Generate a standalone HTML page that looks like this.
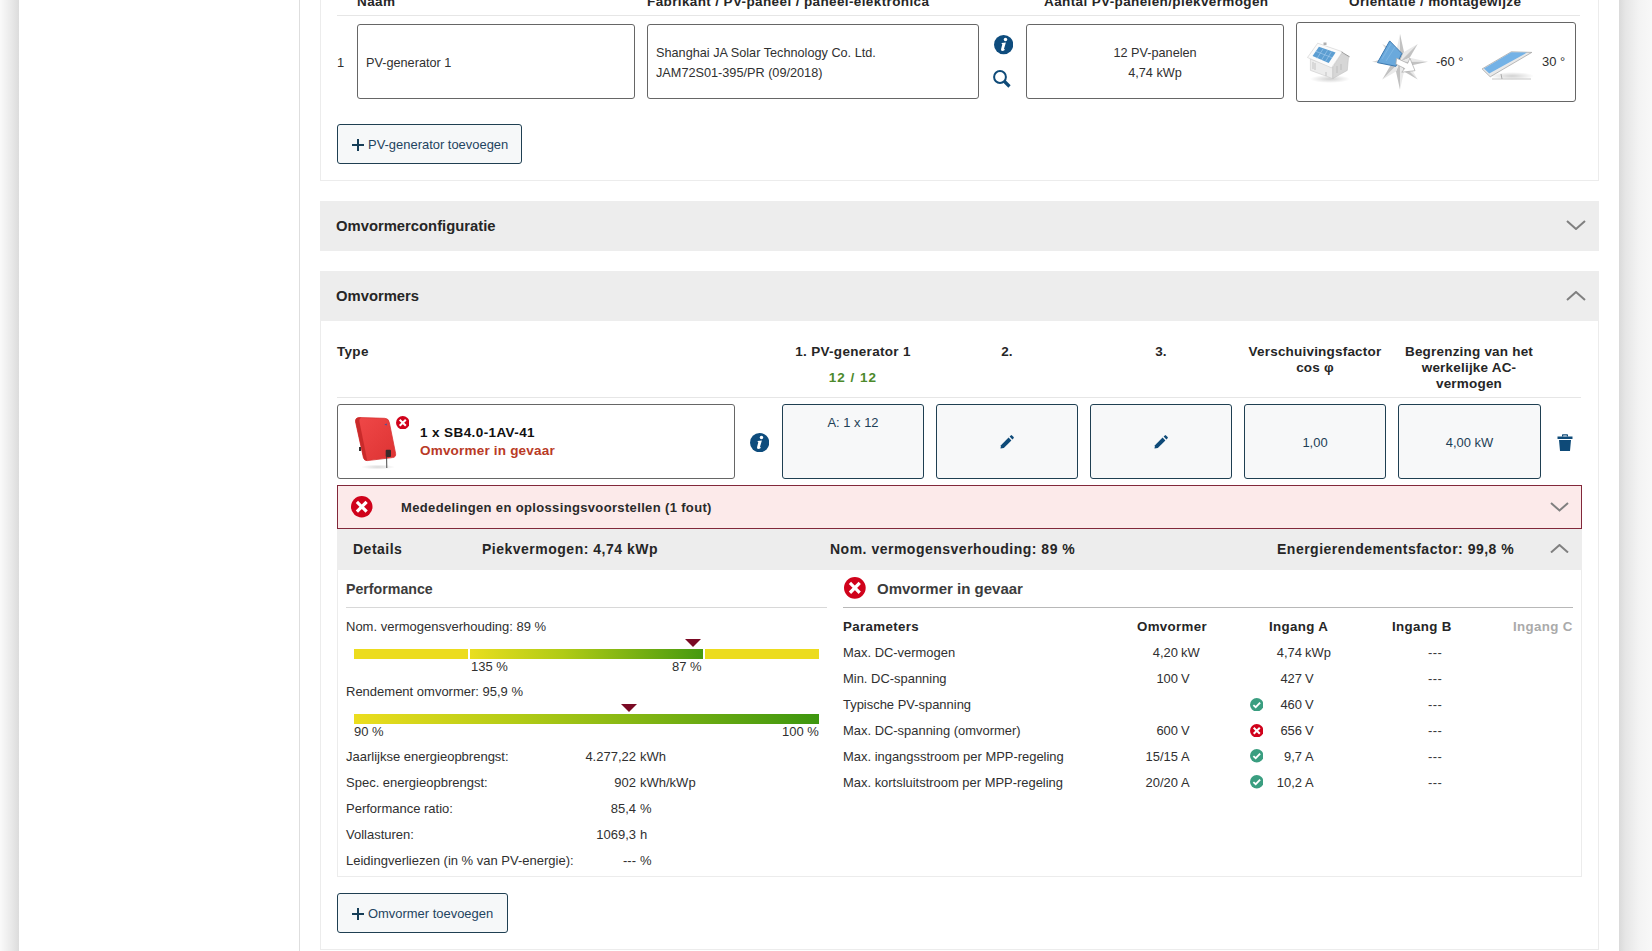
<!DOCTYPE html>
<html><head><meta charset="utf-8">
<style>
*{margin:0;padding:0;box-sizing:border-box}
html,body{width:1652px;height:951px;overflow:hidden;background:#fff;font-family:"Liberation Sans",sans-serif;color:#303030;font-size:12.95px}
.abs{position:absolute}
#shl{position:absolute;left:0;top:0;width:19px;height:951px;background:linear-gradient(to right,#fafafa,#e9e9e9 60%,#dcdcdc)}
#shr{position:absolute;left:1619px;top:0;width:33px;height:951px;background:linear-gradient(to right,#dadada,#e6e6e6 20%,#f3f3f3 60%,#f8f8f8)}
.vl{position:absolute;width:1px;background:#dedede}
.hl{position:absolute;height:1px;background:#e6e6e6}
.box{position:absolute;border:1px solid #666;border-radius:3px;background:#fff;font-size:12.7px}
.ibox{position:absolute;border:1px solid #1f3f52;border-radius:3px;background:#f7f8f9;color:#1e3f56;text-align:center}
.btn{position:absolute;border:1px solid #1f3f52;border-radius:3px;background:#f6f8f9;color:#1e4460;font-size:12.95px}
.b{font-weight:bold;color:#262626}
.hdr{position:absolute;background:#ededed}
.t{position:absolute;white-space:nowrap;line-height:16px;margin-top:1px}
</style></head><body>
<div id="shl"></div><div id="shr"></div>
<div class="vl" style="left:299px;top:0;height:951px"></div>

<!-- panel 1 -->
<div class="abs" style="left:320px;top:-10px;width:1279px;height:191px;border:1px solid #ececec;border-top:none"></div>
<div class="t b" style="left:357px;top:-7px;font-size:13.5px;letter-spacing:0.38px">Naam</div>
<div class="t b" style="left:647px;top:-7px;font-size:13.5px;letter-spacing:0.38px">Fabrikant / PV-paneel / paneel-elektronica</div>
<div class="t b" style="left:1044px;top:-7px;font-size:13.5px;letter-spacing:0.38px">Aantal PV-panelen/piekvermogen</div>
<div class="t b" style="left:1349px;top:-7px;font-size:13.5px;letter-spacing:0.38px">Orientatie / montagewijze</div>
<div class="hl" style="left:337px;top:15px;width:1243px"></div>
<div class="t" style="left:337px;top:54px">1</div>
<div class="box" style="left:357px;top:24px;width:278px;height:75px"><div class="t" style="left:8px;top:29px">PV-generator 1</div></div>
<div class="box" style="left:647px;top:24px;width:332px;height:75px"><div class="t" style="left:8px;top:19px">Shanghai JA Solar Technology Co. Ltd.</div><div class="t" style="left:8px;top:39px">JAM72S01-395/PR (09/2018)</div></div>
<div class="box" style="left:1026px;top:24px;width:258px;height:75px;text-align:center"><div style="position:absolute;left:0;right:0;top:20px;line-height:16px">12 PV-panelen</div><div style="position:absolute;left:0;right:0;top:40px;line-height:16px">4,74 kWp</div></div>
<div class="box" style="left:1296px;top:22px;width:280px;height:80px"></div>
<div class="btn" style="left:337px;top:124px;width:185px;height:40px"><span class="abs" style="left:30px;top:12px">PV-generator toevoegen</span></div>

<!-- section headers -->
<div class="hdr" style="left:320px;top:201px;width:1279px;height:50px"><div class="t b" style="left:16px;top:16px;font-size:14.8px">Omvormerconfiguratie</div></div>
<div class="hdr" style="left:320px;top:271px;width:1279px;height:50px"><div class="t b" style="left:16px;top:16px;font-size:14.8px">Omvormers</div></div>


<!-- omvormers body -->
<div class="abs" style="left:320px;top:321px;width:1279px;height:629px;border:1px solid #ececec;border-top:none"></div>
<div class="t b" style="left:337px;top:343px;font-size:13.5px;letter-spacing:0.3px">Type</div>
<div class="t b" style="left:773px;top:343px;width:160px;text-align:center;font-size:13.5px;letter-spacing:0.3px">1. PV-generator 1</div>
<div class="t b" style="left:773px;top:369px;width:160px;text-align:center;font-size:13.5px;letter-spacing:1px;color:#4c8a2c">12 / 12</div>
<div class="t b" style="left:927px;top:343px;width:160px;text-align:center;font-size:13.5px">2.</div>
<div class="t b" style="left:1081px;top:343px;width:160px;text-align:center;font-size:13.5px">3.</div>
<div class="t b" style="left:1235px;top:343px;width:160px;text-align:center;font-size:13.5px;letter-spacing:0.2px">Verschuivingsfactor<br>cos φ</div>
<div class="t b" style="left:1389px;top:343px;width:160px;text-align:center;font-size:13.5px;letter-spacing:0.2px">Begrenzing van het<br>werkelijke AC-<br>vermogen</div>
<div class="hl" style="left:337px;top:397px;width:1244px"></div>

<div class="box" style="left:337px;top:404px;width:398px;height:75px"></div>
<div class="t b" style="left:420px;top:424px;font-size:13.5px;letter-spacing:0.4px;color:#111">1 x SB4.0-1AV-41</div>
<div class="t b" style="left:420px;top:442px;font-size:13.5px;letter-spacing:0.2px;color:#b93a26">Omvormer in gevaar</div>

<div class="ibox" style="left:782px;top:404px;width:142px;height:75px"><div class="t" style="left:0;right:0;top:9px;font-size:12.95px">A: 1 x 12</div></div>
<div class="ibox" style="left:936px;top:404px;width:142px;height:75px"></div>
<div class="ibox" style="left:1090px;top:404px;width:142px;height:75px"></div>
<div class="ibox" style="left:1244px;top:404px;width:142px;height:75px"><div class="t" style="left:0;right:0;top:29px">1,00</div></div>
<div class="ibox" style="left:1398px;top:404px;width:143px;height:75px"><div class="t" style="left:0;right:0;top:29px">4,00 kW</div></div>

<!-- error bar -->
<div class="abs" style="left:337px;top:485px;width:1245px;height:44px;background:#fceaea;border:1px solid #82283a"></div>
<div class="t b" style="left:401px;top:499px;font-size:13px;letter-spacing:0.35px;color:#2a2a2a">Mededelingen en oplossingsvoorstellen (1 fout)</div>

<!-- details bar -->
<div class="abs" style="left:337px;top:529px;width:1245px;height:41px;background:#ededed"></div>
<div class="t b" style="left:353px;top:540px;font-size:14px;letter-spacing:0.5px">Details</div>
<div class="t b" style="left:482px;top:540px;font-size:14px;letter-spacing:0.5px">Piekvermogen: 4,74 kWp</div>
<div class="t b" style="left:830px;top:540px;font-size:14px;letter-spacing:0.5px">Nom. vermogensverhouding: 89 %</div>
<div class="t b" style="left:1277px;top:540px;font-size:14px;letter-spacing:0.5px">Energierendementsfactor: 99,8 %</div>

<!-- details content -->
<div class="abs" style="left:337px;top:570px;width:1245px;height:307px;border:1px solid #ececec;border-top:none"></div>
<div class="t b" style="left:346px;top:580px;font-size:14.2px;color:#3c3c3c">Performance</div>
<div class="hl" style="left:346px;top:607px;width:481px;background:#d8d8d8"></div>
<div class="t" style="left:346px;top:618px;font-size:13px">Nom. vermogensverhouding: 89 %</div>
<div class="abs" style="left:354px;top:649px;width:114px;height:10px;background:#ecdc1e"></div>
<div class="abs" style="left:470px;top:649px;width:233px;height:10px;background:linear-gradient(to right,#e9de1f,#b0cb16 40%,#46990f)"></div>
<div class="abs" style="left:705px;top:649px;width:114px;height:10px;background:#ecdc1e"></div>
<div class="t" style="left:471px;top:658px;font-size:13px">135 %</div>
<div class="t" style="left:672px;top:658px;font-size:13px">87 %</div>
<div class="t" style="left:346px;top:683px;font-size:13px">Rendement omvormer: 95,9 %</div>
<div class="abs" style="left:354px;top:714px;width:465px;height:10px;background:linear-gradient(to right,#ecdd1e,#b2cb16 35%,#3d960f)"></div>
<div class="t" style="left:354px;top:723px;font-size:13px">90 %</div>
<div class="t" style="left:782px;top:723px;font-size:13px">100 %</div>

<div class="t" style="left:346px;top:748px;font-size:13px">Jaarlijkse energieopbrengst:</div>
<div class="t" style="left:346px;top:774px;font-size:13px">Spec. energieopbrengst:</div>
<div class="t" style="left:346px;top:800px;font-size:13px">Performance ratio:</div>
<div class="t" style="left:346px;top:826px;font-size:13px">Vollasturen:</div>
<div class="t" style="left:346px;top:852px;font-size:13px">Leidingverliezen (in % van PV-energie):</div>
<div class="t" style="left:536px;top:748px;width:100px;text-align:right;font-size:13px">4.277,22</div><div class="t" style="left:640px;top:748px;font-size:13px">kWh</div>
<div class="t" style="left:536px;top:774px;width:100px;text-align:right;font-size:13px">902</div><div class="t" style="left:640px;top:774px;font-size:13px">kWh/kWp</div>
<div class="t" style="left:536px;top:800px;width:100px;text-align:right;font-size:13px">85,4</div><div class="t" style="left:640px;top:800px;font-size:13px">%</div>
<div class="t" style="left:536px;top:826px;width:100px;text-align:right;font-size:13px">1069,3</div><div class="t" style="left:640px;top:826px;font-size:13px">h</div>
<div class="t" style="left:536px;top:852px;width:100px;text-align:right;font-size:13px">---</div><div class="t" style="left:640px;top:852px;font-size:13px">%</div>

<!-- right: Omvormer in gevaar -->
<div class="t b" style="left:877px;top:580px;font-size:15px;color:#3c3c3c">Omvormer in gevaar</div>
<div class="hl" style="left:843px;top:607px;width:730px;background:#b8b8b8"></div>
<div class="t b" style="left:843px;top:618px;font-size:13.3px;letter-spacing:0.35px">Parameters</div>
<div class="t b" style="left:1137px;top:618px;font-size:13.3px;letter-spacing:0.35px">Omvormer</div>
<div class="t b" style="left:1269px;top:618px;font-size:13.3px;letter-spacing:0.35px">Ingang A</div>
<div class="t b" style="left:1392px;top:618px;font-size:13.3px;letter-spacing:0.35px">Ingang B</div>
<div class="t b" style="left:1513px;top:618px;font-size:13.3px;letter-spacing:0.35px;color:#aaa">Ingang C</div>
<div class="t" style="left:843px;top:644px;font-size:12.95px">Max. DC-vermogen</div>
<div class="t" style="left:1078px;top:644px;width:100px;text-align:right;font-size:12.95px">4,20</div><div class="t" style="left:1181px;top:644px;font-size:12.95px">kW</div>
<div class="t" style="left:1202px;top:644px;width:100px;text-align:right;font-size:12.95px">4,74</div><div class="t" style="left:1305px;top:644px;font-size:12.95px">kWp</div>
<div class="t" style="left:1428px;top:644px;font-size:12.95px;color:#3a3a3a;letter-spacing:0.4px">---</div>
<div class="t" style="left:843px;top:670px;font-size:12.95px">Min. DC-spanning</div>
<div class="t" style="left:1078px;top:670px;width:100px;text-align:right;font-size:12.95px">100</div><div class="t" style="left:1181px;top:670px;font-size:12.95px">V</div>
<div class="t" style="left:1202px;top:670px;width:100px;text-align:right;font-size:12.95px">427</div><div class="t" style="left:1305px;top:670px;font-size:12.95px">V</div>
<div class="t" style="left:1428px;top:670px;font-size:12.95px;color:#3a3a3a;letter-spacing:0.4px">---</div>
<div class="t" style="left:843px;top:696px;font-size:12.95px">Typische PV-spanning</div>
<div class="t" style="left:1202px;top:696px;width:100px;text-align:right;font-size:12.95px">460</div><div class="t" style="left:1305px;top:696px;font-size:12.95px">V</div>
<div class="t" style="left:1428px;top:696px;font-size:12.95px;color:#3a3a3a;letter-spacing:0.4px">---</div>
<div class="t" style="left:843px;top:722px;font-size:12.95px">Max. DC-spanning (omvormer)</div>
<div class="t" style="left:1078px;top:722px;width:100px;text-align:right;font-size:12.95px">600</div><div class="t" style="left:1181px;top:722px;font-size:12.95px">V</div>
<div class="t" style="left:1202px;top:722px;width:100px;text-align:right;font-size:12.95px">656</div><div class="t" style="left:1305px;top:722px;font-size:12.95px">V</div>
<div class="t" style="left:1428px;top:722px;font-size:12.95px;color:#3a3a3a;letter-spacing:0.4px">---</div>
<div class="t" style="left:843px;top:748px;font-size:12.95px">Max. ingangsstroom per MPP-regeling</div>
<div class="t" style="left:1078px;top:748px;width:100px;text-align:right;font-size:12.95px">15/15</div><div class="t" style="left:1181px;top:748px;font-size:12.95px">A</div>
<div class="t" style="left:1202px;top:748px;width:100px;text-align:right;font-size:12.95px">9,7</div><div class="t" style="left:1305px;top:748px;font-size:12.95px">A</div>
<div class="t" style="left:1428px;top:748px;font-size:12.95px;color:#3a3a3a;letter-spacing:0.4px">---</div>
<div class="t" style="left:843px;top:774px;font-size:12.95px">Max. kortsluitstroom per MPP-regeling</div>
<div class="t" style="left:1078px;top:774px;width:100px;text-align:right;font-size:12.95px">20/20</div><div class="t" style="left:1181px;top:774px;font-size:12.95px">A</div>
<div class="t" style="left:1202px;top:774px;width:100px;text-align:right;font-size:12.95px">10,2</div><div class="t" style="left:1305px;top:774px;font-size:12.95px">A</div>
<div class="t" style="left:1428px;top:774px;font-size:12.95px;color:#3a3a3a;letter-spacing:0.4px">---</div>


<!-- images -->
<svg class="abs" style="left:1296px;top:22px" width="280" height="80" viewBox="1296 22 280 80">
 <defs>
  <linearGradient id="wall" x1="0" y1="0" x2="1" y2="0"><stop offset="0" stop-color="#f2f2f2"/><stop offset="1" stop-color="#dcdcdc"/></linearGradient>
  <linearGradient id="blue1" x1="0" y1="0" x2="1" y2="1"><stop offset="0" stop-color="#4e90c8"/><stop offset="1" stop-color="#7fb8e4"/></linearGradient>
  <radialGradient id="shad" cx="0.5" cy="0.5" r="0.5"><stop offset="0" stop-color="#000" stop-opacity="0.18"/><stop offset="1" stop-color="#000" stop-opacity="0"/></radialGradient>
  <linearGradient id="star" x1="0" y1="0" x2="1" y2="1"><stop offset="0" stop-color="#eeeeee"/><stop offset="1" stop-color="#b8b8b8"/></linearGradient>
 </defs>
 <!-- house -->
 <ellipse cx="1330" cy="79" rx="20" ry="4" fill="url(#shad)"/>
 <path d="M1310.4 59L1310.4 70.4L1332.8 78.6L1332.8 67.2Z" fill="#ececec" stroke="#c4c4c4" stroke-width="0.5"/>
 <path d="M1332.8 67.2L1341.6 53.3L1348.6 56.5L1347.3 70.4L1332.8 78.6Z" fill="#d6d6d6" stroke="#bdbdbd" stroke-width="0.5"/>
 <path d="M1313 62V69M1315 63V70M1326 72V76M1337 66V73M1341 64V70" stroke="#b5b5b5" stroke-width="0.7"/>
 <rect x="1323.5" y="42.5" width="3" height="2.5" fill="#b0b0b0"/>
 <path d="M1307.5 57.5L1317.7 43.2L1342.5 51.8L1331.5 67.8Z" fill="#fbfbfb" stroke="#cfcfcf" stroke-width="0.6"/>
 <path d="M1341.6 52.1L1349.6 56.8" stroke="#9a9a9a" stroke-width="1"/>
 <path d="M1312.6 55.9L1318.9 46.7L1335.6 52.4L1328.7 63.1Z" fill="#5c9ed2"/>
 <path d="M1315.8 51.3L1332.1 57.7M1317 58.5L1323 49M1321.5 60L1327.5 50.3M1325.5 61.5L1331.5 51.5" stroke="#a9cfee" stroke-width="0.6"/>
 <!-- compass star -->
 <path d="M1400 61.8L1400.0 33.8L1396.0 52.1Z" fill="#e9e9e9"/><path d="M1400 61.8L1400.0 33.8L1404.0 52.1Z" fill="#c2c2c2"/><path d="M1400 61.8L1417.7 44.1L1404.0 52.1Z" fill="#e9e9e9"/><path d="M1400 61.8L1417.7 44.1L1409.7 57.8Z" fill="#c2c2c2"/><path d="M1400 61.8L1428.0 61.8L1409.7 57.8Z" fill="#e9e9e9"/><path d="M1400 61.8L1428.0 61.8L1409.7 65.8Z" fill="#c2c2c2"/><path d="M1400 61.8L1417.7 79.5L1409.7 65.8Z" fill="#e9e9e9"/><path d="M1400 61.8L1417.7 79.5L1404.0 71.5Z" fill="#c2c2c2"/><path d="M1400 61.8L1400.0 89.8L1404.0 71.5Z" fill="#e9e9e9"/><path d="M1400 61.8L1400.0 89.8L1396.0 71.5Z" fill="#c2c2c2"/><path d="M1400 61.8L1382.3 79.5L1396.0 71.5Z" fill="#e9e9e9"/><path d="M1400 61.8L1382.3 79.5L1390.3 65.8Z" fill="#c2c2c2"/><path d="M1400 61.8L1372.0 61.8L1390.3 65.8Z" fill="#e9e9e9"/><path d="M1400 61.8L1372.0 61.8L1390.3 57.8Z" fill="#c2c2c2"/><path d="M1400 61.8L1382.3 44.1L1390.3 57.8Z" fill="#e9e9e9"/><path d="M1400 61.8L1382.3 44.1L1396.0 52.1Z" fill="#c2c2c2"/>
 <path d="M1377.5 62.6L1389.7 40.9L1401.8 53.4L1395.9 66.3Z" fill="#6aa9dc" stroke="#3a78b0" stroke-width="1"/><path d="M1382 59L1391 44M1386 61L1395 47" stroke="#8cc0e8" stroke-width="0.6"/>
 <path d="M1396.6 58.2L1407.7 63.3L1409.9 58.2L1415 70.7L1401.8 72.2L1404.7 68.5L1395.9 64.1Z" fill="#fff" stroke="#a8a8a8" stroke-width="0.7"/>
 <!-- tilted panel -->
 <ellipse cx="1512" cy="76" rx="22" ry="4" fill="url(#shad)"/>
 <path d="M1492 79L1531 79" stroke="#c8c8c8" stroke-width="1.2"/>
 <path d="M1501 74L1502 79" stroke="#aaa" stroke-width="1"/>
 <path d="M1482.1 68.9L1511.3 51.8L1531.8 52.4L1490.2 76.8Z" fill="#e9e9e9" stroke="#9c9c9c" stroke-width="0.7"/>
 <path d="M1483.9 68.4L1511.3 52.3L1527 52.6L1489.2 73.6Z" fill="#74b2e6"/>
</svg>
<svg class="abs" style="left:348px;top:410px" width="64" height="64" viewBox="348 410 64 64">
 <defs><radialGradient id="shad2" cx="0.5" cy="0.5" r="0.5"><stop offset="0" stop-color="#000" stop-opacity="0.15"/><stop offset="1" stop-color="#000" stop-opacity="0"/></radialGradient>
 <linearGradient id="red1" x1="0" y1="0" x2="1" y2="1"><stop offset="0" stop-color="#f04848"/><stop offset="1" stop-color="#dd3333"/></linearGradient></defs>
 <ellipse cx="378" cy="467" rx="17" ry="2.5" fill="url(#shad2)"/>
 <path d="M360 417.6L384.5 418.3Q388.6 418.4 389.3 422.4L395.6 453.5Q396.2 457.2 392.4 457.6L367.5 460.6Q364.2 461 363.4 457.6L355.6 422Q354.9 417.5 360 417.6Z" fill="url(#red1)" stroke="#d83232" stroke-width="0.8"/>
 <path d="M355.6 422Q354.9 417.5 360 417.6L361.5 417.7Q358.8 418.5 359.5 422L367 459.5L367.5 460.6Q364.2 461 363.4 457.6Z" fill="#c92a2a"/>
 <path d="M384.5 424.5L387 423.5L386.5 425.5Z" fill="#3355aa"/>
 <rect x="385.7" y="449.7" width="5.3" height="7.4" rx="1" fill="#3a2a2a"/>
 <path d="M386.6 457L386.8 468" stroke="#333" stroke-width="0.9"/>
 <rect x="359" y="447" width="2" height="4" fill="#333"/>
</svg>
<div class="t" style="left:1436px;top:53px">-60 °</div>
<div class="t" style="left:1542px;top:53px">30 °</div>
<!-- add button -->
<div class="btn" style="left:337px;top:893px;width:171px;height:40px"><span class="abs" style="left:30px;top:12px">Omvormer toevoegen</span></div>
<svg class="abs" style="left:993.75px;top:35.25px" width="19.3" height="19.3" viewBox="0 0 20 20"><circle cx="10" cy="10" r="10" fill="#0e4c7d"/><circle cx="11.9" cy="4.7" r="1.8" fill="#fff"/><path d="M7.9 8.3L12.3 7.7L10.4 14.3Q10.2 15.1 11 14.7L11.7 14.2Q10.9 16.6 8.6 16.6Q6.9 16.6 7.3 14.8L8.6 9.6Q8.7 9.1 7.9 9.2Z" fill="#fff"/></svg>
<svg class="abs" style="left:993px;top:70px" width="18" height="18" viewBox="0 0 18 18"><circle cx="7" cy="7" r="5.9" stroke="#0e4a78" stroke-width="2" fill="none"/><path d="M11 11L16.5 16.5" stroke="#0e4a78" stroke-width="3.2"/></svg>
<svg class="abs" style="left:1566.0px;top:220.0px" width="20" height="10.0" viewBox="0 0 20 10.0"><path d="M1 1L10.0 9.0L19 1" stroke="#808080" stroke-width="2" fill="none"/></svg>
<svg class="abs" style="left:1566.0px;top:290.5px" width="20" height="10.0" viewBox="0 0 20 10.0"><path d="M1 9.0L10.0 1L19 9.0" stroke="#808080" stroke-width="2" fill="none"/></svg>
<svg class="abs" style="left:352px;top:139px" width="12" height="12" viewBox="0 0 12 12"><path d="M0 6H12M6 0V12" stroke="#163e58" stroke-width="2"/></svg>
<svg class="abs" style="left:352px;top:908px" width="12" height="12" viewBox="0 0 12 12"><path d="M0 6H12M6 0V12" stroke="#163e58" stroke-width="2"/></svg>
<svg class="abs" style="left:395.75px;top:415.65px" width="13.5" height="13.5" viewBox="0 0 22 22"><circle cx="11" cy="11" r="11" fill="#d0021b"/><path d="M7.2 7.2L14.8 14.8M14.8 7.2L7.2 14.8" stroke="#fff" stroke-width="3.3" stroke-linecap="square"/></svg>
<svg class="abs" style="left:749.75px;top:432.55px" width="19.3" height="19.3" viewBox="0 0 20 20"><circle cx="10" cy="10" r="10" fill="#0e4c7d"/><circle cx="11.9" cy="4.7" r="1.8" fill="#fff"/><path d="M7.9 8.3L12.3 7.7L10.4 14.3Q10.2 15.1 11 14.7L11.7 14.2Q10.9 16.6 8.6 16.6Q6.9 16.6 7.3 14.8L8.6 9.6Q8.7 9.1 7.9 9.2Z" fill="#fff"/></svg>
<svg class="abs" style="left:999px;top:434px" width="16" height="16" viewBox="0 0 16 16"><path d="M1.5 14.5L2 11.2L9.6 3.6L12.4 6.4L4.8 14Z" fill="#0e4a78"/><path d="M10.6 2.6L11.8 1.4Q12.4 0.8 13 1.4L14.6 3Q15.2 3.6 14.6 4.2L13.4 5.4Z" fill="#0e4a78"/></svg>
<svg class="abs" style="left:1153px;top:434px" width="16" height="16" viewBox="0 0 16 16"><path d="M1.5 14.5L2 11.2L9.6 3.6L12.4 6.4L4.8 14Z" fill="#0e4a78"/><path d="M10.6 2.6L11.8 1.4Q12.4 0.8 13 1.4L14.6 3Q15.2 3.6 14.6 4.2L13.4 5.4Z" fill="#0e4a78"/></svg>
<svg class="abs" style="left:1557px;top:433.5px" width="16" height="18" viewBox="0 0 16 18"><path d="M0.5 2.5H15.5V5H0.5Z" fill="#0e4a78"/><path d="M5 2.5V1Q5 0.3 5.7 0.3H10.3Q11 0.3 11 1V2.5H9.8V1.5H6.2V2.5Z" fill="#0e4a78"/><path d="M2 6H14L13 17H3Z" fill="#0e4a78"/></svg>
<svg class="abs" style="left:351.25px;top:496.25px" width="21.5" height="21.5" viewBox="0 0 22 22"><circle cx="11" cy="11" r="11" fill="#d0021b"/><path d="M7.2 7.2L14.8 14.8M14.8 7.2L7.2 14.8" stroke="#fff" stroke-width="3.3" stroke-linecap="square"/></svg>
<svg class="abs" style="left:1549.5px;top:502.25px" width="19" height="9.5" viewBox="0 0 19 9.5"><path d="M1 1L9.5 8.5L18 1" stroke="#808080" stroke-width="2" fill="none"/></svg>
<svg class="abs" style="left:1549.5px;top:543.75px" width="19" height="9.5" viewBox="0 0 19 9.5"><path d="M1 8.5L9.5 1L18 8.5" stroke="#808080" stroke-width="2" fill="none"/></svg>
<svg class="abs" style="left:844.15px;top:577.15px" width="21.7" height="21.7" viewBox="0 0 22 22"><circle cx="11" cy="11" r="11" fill="#d0021b"/><path d="M7.2 7.2L14.8 14.8M14.8 7.2L7.2 14.8" stroke="#fff" stroke-width="3.3" stroke-linecap="square"/></svg>
<svg class="abs" style="left:685px;top:639px" width="16" height="8" viewBox="0 0 16 8"><path d="M0 0H16L8 8Z" fill="#7a0a24"/></svg>
<svg class="abs" style="left:621px;top:704px" width="16" height="8" viewBox="0 0 16 8"><path d="M0 0H16L8 8Z" fill="#7a0a24"/></svg>
<svg class="abs" style="left:1249.75px;top:697.55px" width="13.5" height="13.5" viewBox="0 0 22 22"><circle cx="11" cy="11" r="11" fill="#3a9e80"/><path d="M5.5 11.5L9.3 15L16.5 7.5" stroke="#fff" stroke-width="3" fill="none"/></svg>
<svg class="abs" style="left:1249.75px;top:723.55px" width="13.5" height="13.5" viewBox="0 0 22 22"><circle cx="11" cy="11" r="11" fill="#d0021b"/><path d="M7.2 7.2L14.8 14.8M14.8 7.2L7.2 14.8" stroke="#fff" stroke-width="3.3" stroke-linecap="square"/></svg>
<svg class="abs" style="left:1249.75px;top:749.45px" width="13.5" height="13.5" viewBox="0 0 22 22"><circle cx="11" cy="11" r="11" fill="#3a9e80"/><path d="M5.5 11.5L9.3 15L16.5 7.5" stroke="#fff" stroke-width="3" fill="none"/></svg>
<svg class="abs" style="left:1249.75px;top:775.35px" width="13.5" height="13.5" viewBox="0 0 22 22"><circle cx="11" cy="11" r="11" fill="#3a9e80"/><path d="M5.5 11.5L9.3 15L16.5 7.5" stroke="#fff" stroke-width="3" fill="none"/></svg>
</body></html>
